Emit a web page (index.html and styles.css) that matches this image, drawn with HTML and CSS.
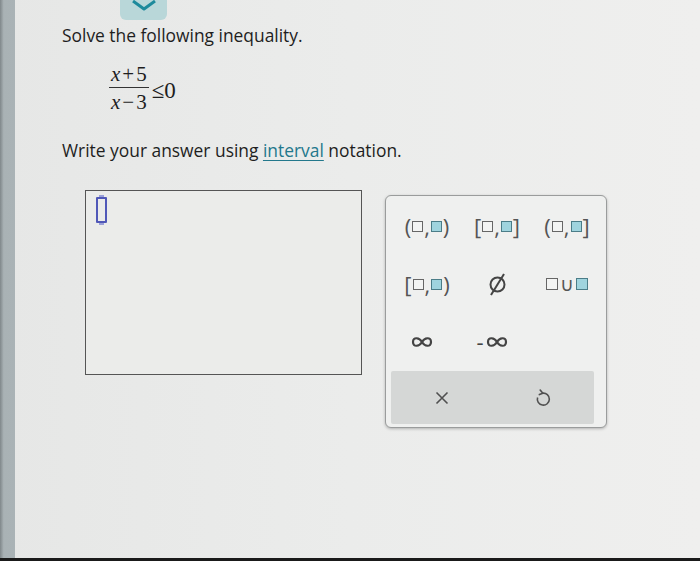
FILE: index.html
```html
<!DOCTYPE html>
<html lang="en">
<head>
  <meta charset="UTF-8">
  <title>Solve the inequality</title>
  <link rel="stylesheet" href="styles.css">
</head>
<body>
  <div class="screen">
    <div class="side"></div>

    <main class="page">
      <div class="tab">
        <svg width="26" height="11" viewBox="0 0 26 11"><path d="M2 1 L13 9 L24 1" fill="none" stroke="#1d8a9c" stroke-width="3" stroke-linejoin="round"/></svg>
      </div>

      <p class="prompt">Solve the following inequality.</p>

      <div class="math">
        <div class="frac">
          <span class="num"><i>x</i><span class="op">+</span>5</span>
          <span class="den"><i>x</i><span class="op">&minus;</span>3</span>
        </div>
        <span class="rel">&le;0</span>
      </div>

      <p class="prompt second">Write your answer using <a class="link" href="#">interval</a> notation.</p>

      <div class="answer-row">
        <div class="answer-box">
          <span class="cursor"></span>
        </div>

        <div class="palette">
          <div class="keys">
            <button class="key">(<span class="sq"></span>,<span class="sq on"></span>)</button>
            <button class="key">[<span class="sq"></span>,<span class="sq on"></span>]</button>
            <button class="key">(<span class="sq"></span>,<span class="sq on"></span>]</button>

            <button class="key">[<span class="sq"></span>,<span class="sq on"></span>)</button>
            <button class="key">
              <svg width="19" height="23" viewBox="0 0 19 23"><circle cx="9.5" cy="11.5" r="7" fill="none" stroke="#444" stroke-width="2"/><path d="M16 1 L3 22" stroke="#444" stroke-width="2"/></svg>
            </button>
            <button class="key union"><span class="sq"></span><span class="cup">&cup;</span><span class="sq on"></span></button>

            <button class="key inf" aria-label="infinity">
              <svg width="22" height="14" viewBox="0 0 22 14"><path d="M11 7 C8.5 2.5 2 1.5 2 7 C2 12.5 8.5 11.5 11 7 C13.5 2.5 20 1.5 20 7 C20 12.5 13.5 11.5 11 7 Z" fill="none" stroke="#444" stroke-width="2.2"/></svg>
            </button>
            <button class="key inf" aria-label="negative infinity">
              <span class="minus">-</span>
              <svg width="22" height="14" viewBox="0 0 22 14"><path d="M11 7 C8.5 2.5 2 1.5 2 7 C2 12.5 8.5 11.5 11 7 C13.5 2.5 20 1.5 20 7 C20 12.5 13.5 11.5 11 7 Z" fill="none" stroke="#444" stroke-width="2.2"/></svg>
            </button>
            <span></span>
          </div>

          <div class="actions">
            <button class="act">
              <svg width="14" height="14" viewBox="0 0 14 14"><path d="M1.5 1.5 L12.5 12.5 M12.5 1.5 L1.5 12.5" stroke="#505050" stroke-width="1.6"/></svg>
            </button>
            <button class="act">
              <svg width="16" height="18" viewBox="0 0 16 18"><path d="M7.6 4.2 A6 6 0 1 1 2.6 8.4" fill="none" stroke="#505050" stroke-width="1.6"/><path d="M5.2 1 L7.8 4.2 L4.4 5.6" fill="none" stroke="#505050" stroke-width="1.6" stroke-linejoin="round" stroke-linecap="round"/></svg>
            </button>
          </div>
        </div>
      </div>
    </main>
  </div>
</body>
</html>
```

FILE: styles.css
```css
* {
  margin: 0;
  padding: 0;
  box-sizing: border-box;
}

body {
  background-color: #e9eae9;
  font-family: "Open Sans", "Liberation Sans", sans-serif;
  color: #1e1e1e;
}

.screen {
  display: flex;
  width: 700px;
  height: 561px;
  background: linear-gradient(90deg, #e6e7e6 0%, #ebeceb 50%, #efefee 100%);
  border-bottom: 3px solid #1a1a1a;
}

.side {
  width: 15px;
  background: linear-gradient(90deg, #7f878a 0%, #a9b2b5 25%, #aab3b6 100%);
}

.page {
  flex: 1;
  padding-left: 47px;
}

.tab {
  width: 47px;
  height: 20px;
  margin-left: 58px;
  background-color: #b9d7d9;
  border-radius: 0 0 6px 6px;
  display: flex;
  justify-content: center;
  align-items: flex-start;
}

.prompt {
  margin-top: 3px;
  font-size: 17.4px;
  line-height: 24px;
}

.prompt.second {
  margin-top: 25px;
}

.link {
  color: #23788c;
  text-decoration: underline;
  text-underline-offset: 3px;
}

.math {
  display: flex;
  align-items: center;
  margin-top: 16px;
  margin-left: 47px;
  font-family: "Liberation Serif", serif;
  font-size: 21px;
}

.frac {
  display: flex;
  flex-direction: column;
  align-items: center;
}

.op {
  margin: 0 2px;
}

.num {
  padding: 0 2px 2px;
  line-height: 22px;
  border-bottom: 1.5px solid #333;
}

.den {
  padding: 3px 2px 0;
  line-height: 22px;
}

.rel {
  margin-left: 3px;
  margin-top: 5px;
  font-size: 23px;
}

.answer-row {
  display: flex;
  align-items: flex-start;
  gap: 23px;
  margin-top: 28px;
  margin-left: 23px;
}

.answer-box {
  width: 277px;
  height: 185px;
  border: 1.5px solid #555;
  background-color: #ebecea;
  padding: 5px 0 0 10px;
}

.cursor {
  display: block;
  width: 11px;
  height: 26px;
  margin-top: 1px;
  border: 2px solid #5058b8;
  border-radius: 1px;
  position: relative;
}

.cursor::before,
.cursor::after {
  content: "";
  position: absolute;
  left: 1px;
  width: 5px;
  height: 2px;
  background-color: #9aa0d8;
}

.cursor::before {
  top: -4px;
}

.cursor::after {
  bottom: -4px;
}

.palette {
  margin-top: 5px;
  width: 222px;
  background-color: #eff0ef;
  border: 1px solid #9a9c9c;
  border-radius: 6px;
  box-shadow: 0 1px 3px rgba(0, 0, 0, 0.25);
  padding: 1px 0 3px;
}

.keys {
  display: grid;
  grid-template-columns: repeat(3, 70px);
  grid-auto-rows: 58px;
  padding: 0 6px;
}

.key {
  border: none;
  background: transparent;
  display: flex;
  justify-content: center;
  align-items: center;
  font-family: "Open Sans", "Liberation Sans", sans-serif;
  font-size: 22px;
  color: #555;
  cursor: pointer;
}

.key.inf {
  padding-right: 10px;
}

.sq {
  display: inline-block;
  width: 11px;
  height: 11px;
  margin: 0 1px;
  border: 1.5px solid #666;
  background-color: #f3f4f3;
}

.sq.on {
  background-color: #9fd4de;
  border-color: #4b7d88;
}

.union .sq {
  width: 12px;
  height: 12px;
}

.cup {
  font-size: 19px;
  margin: 0 1px;
}

.minus {
  font-size: 22px;
  color: #444;
  margin-right: 2px;
  padding-bottom: 3px;
}

.actions {
  display: grid;
  grid-template-columns: 1fr 1fr;
  height: 53px;
  margin: 0 12px 0 5px;
  background-color: #d5d7d6;
  border-radius: 2px;
}

.act {
  border: none;
  background: transparent;
  display: flex;
  justify-content: center;
  align-items: center;
  cursor: pointer;
}
```
